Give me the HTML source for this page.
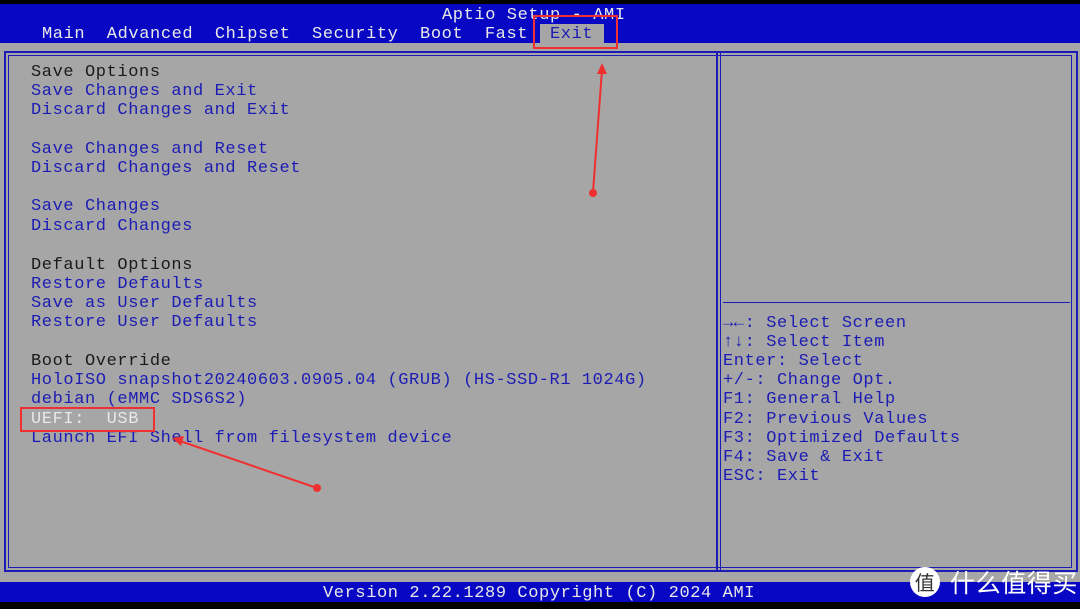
<!DOCTYPE html>
<html><head><meta charset="utf-8"><style>
*{margin:0;padding:0}
body{width:1080px;height:609px;background:#000;position:relative;overflow:hidden;font-family:"Liberation Mono",monospace;font-size:17px;letter-spacing:0.6px}
.a{position:absolute;white-space:pre;line-height:19.2px}
.b{color:#1c1cb4}.k{color:#1a1a1a}.w{color:#e8e8e8}
</style></head><body>
<div style="position:absolute;left:0;top:4px;width:1080px;height:39px;background:#0808c4"></div>
<div style="position:absolute;left:0;top:43px;width:1080px;height:539px;background:#a6a6a6"></div>
<div style="position:absolute;left:0;top:582px;width:1080px;height:20px;background:#0808c4"></div>
<div style="position:absolute;left:540px;top:24px;width:64px;height:19px;background:#a6a6a6"></div>
<div class="a w" style="left:442px;top:6px">Aptio Setup - AMI</div>
<div class="a w" style="left:42px;top:25px">Main  Advanced  Chipset  Security  Boot  Fast</div>
<div class="a b" style="left:550px;top:25px">Exit</div>
<div style="position:absolute;left:4px;top:51px;height:521px;border:2px solid #1c1cb4;box-sizing:border-box;width:1074px"></div>
<div style="position:absolute;left:8px;top:55px;width:1064px;height:513px;border:1px solid #1c1cb4;box-sizing:border-box"></div>
<div style="position:absolute;left:716px;top:53px;width:2px;height:518px;background:#1c1cb4"></div>
<div style="position:absolute;left:720px;top:53px;width:1px;height:518px;background:#1c1cb4"></div>
<div style="position:absolute;left:723px;top:302px;width:347px;height:1px;background:#1c1cb4"></div>
<div class="a k" style="left:31px;top:63px">Save Options</div>
<div class="a b" style="left:31px;top:82.2px">Save Changes and Exit
Discard Changes and Exit

Save Changes and Reset
Discard Changes and Reset

Save Changes
Discard Changes</div>
<div class="a k" style="left:31px;top:255.6px">Default Options</div>
<div class="a b" style="left:31px;top:274.8px">Restore Defaults
Save as User Defaults
Restore User Defaults</div>
<div class="a k" style="left:31px;top:352px">Boot Override</div>
<div class="a b" style="left:31px;top:371.2px">HoloISO snapshot20240603.0905.04 (GRUB) (HS-SSD-R1 1024G)
debian (eMMC SDS6S2)</div>
<div class="a w" style="left:31px;top:409.6px">UEFI:  USB</div>
<div class="a b" style="left:31px;top:428.8px">Launch EFI Shell from filesystem device</div>
<div class="a b" style="left:723px;top:313.6px"><b>→←</b>: Select Screen
<b>↑↓</b>: Select Item
Enter: Select
+/-: Change Opt.
F1: General Help
F2: Previous Values
F3: Optimized Defaults
F4: Save &amp; Exit
ESC: Exit</div>
<div class="a w" style="left:323px;top:584px">Version 2.22.1289 Copyright (C) 2024 AMI</div>
<div style="position:absolute;left:533px;top:15px;width:85px;height:34px;border:2px solid #f03030;box-sizing:border-box"></div>
<div style="position:absolute;left:20px;top:407px;width:135px;height:25px;border:2px solid #f03030;box-sizing:border-box"></div>
<svg width="1080" height="609" style="position:absolute;left:0;top:0">
<line x1="593" y1="192" x2="602" y2="70" stroke="#f03030" stroke-width="2"/>
<polygon points="602,63 597,74 607,74" fill="#f03030"/>
<circle cx="593" cy="193" r="4" fill="#f03030"/>
<line x1="317" y1="488" x2="180" y2="441" stroke="#f03030" stroke-width="2"/>
<polygon points="172,438 184,436 181,446" fill="#f03030"/>
<circle cx="317" cy="488" r="4" fill="#f03030"/>
<circle cx="925" cy="582" r="15" fill="#fff"/>
<text x="925" y="590" font-size="20" text-anchor="middle" fill="#333" font-family="Noto Sans CJK SC,sans-serif">值</text>
<text x="950" y="592" font-size="25" fill="#fff" font-family="Noto Sans CJK SC,sans-serif">什么值得买</text>
</svg>
</body></html>
